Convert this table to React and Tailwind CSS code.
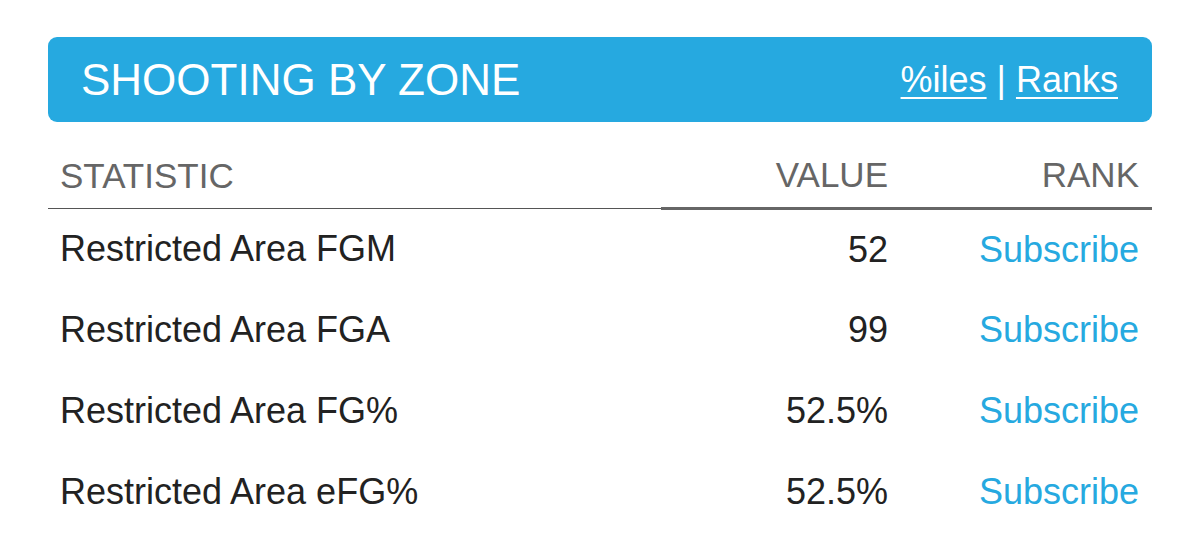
import React from 'react';

const rows = [
  { stat: 'Restricted Area FGM', value: '52' },
  { stat: 'Restricted Area FGA', value: '99' },
  { stat: 'Restricted Area FG%', value: '52.5%' },
  { stat: 'Restricted Area eFG%', value: '52.5%' },
];

export default function App() {
  return (
    <div className="min-h-[548px] w-[1200px] bg-white pt-[37px] px-[48px]" style={{ fontFamily: '"Liberation Sans", Arial, sans-serif' }}>
      <div className="flex h-[85px] items-center justify-between rounded-[9px] bg-[#26a9e0] pl-[33px] pr-[34px] text-white">
        <h2 className="text-[44px] leading-none font-normal">SHOOTING BY ZONE</h2>
        <div className="text-[36px] leading-none">
          <a href="#" className="underline underline-offset-[5px] decoration-2">%iles</a>
          <span> | </span>
          <a href="#" className="underline underline-offset-[5px] decoration-2">Ranks</a>
        </div>
      </div>

      <table className="w-full border-collapse table-fixed">
        <colgroup>
          <col className="w-[613px]" />
          <col className="w-[239px]" />
          <col className="w-[252px]" />
        </colgroup>
        <thead>
          <tr className="text-[35px] leading-[40px] text-[#666]">
            <th className="border-b border-[#555] pl-[12px] pt-[33px] pb-[12px] text-left font-normal">STATISTIC</th>
            <th className="border-b-[3px] border-[#666] pr-[12px] pt-[33px] pb-[12px] text-right font-normal">VALUE</th>
            <th className="border-b-[3px] border-[#666] pr-[13px] pt-[33px] pb-[12px] text-right font-normal">RANK</th>
          </tr>
        </thead>
        <tbody>
          {rows.map((r) => (
            <tr key={r.stat} className="h-[81px] text-[36px] leading-[40px]">
              <td className="pl-[12px] text-[#222]">{r.stat}</td>
              <td className="pr-[12px] text-right text-[#222]">{r.value}</td>
              <td className="pr-[13px] text-right">
                <a href="#" className="text-[#26a9e0]">Subscribe</a>
              </td>
            </tr>
          ))}
        </tbody>
      </table>
    </div>
  );
}
